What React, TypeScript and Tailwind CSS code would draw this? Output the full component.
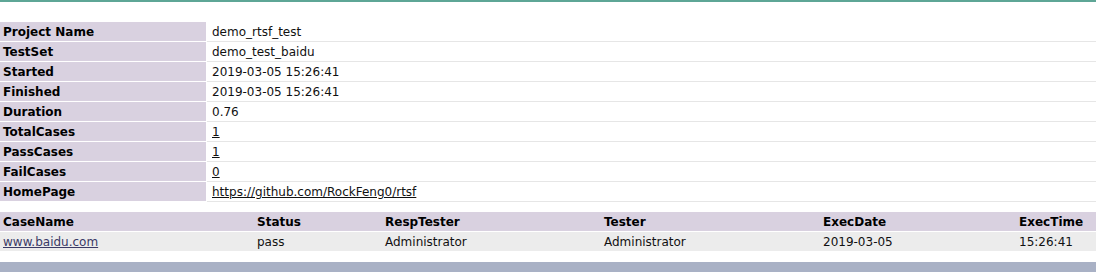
import React from "react";

const info: { label: string; value: string; link?: boolean }[] = [
  { label: "Project Name", value: "demo_rtsf_test" },
  { label: "TestSet", value: "demo_test_baidu" },
  { label: "Started", value: "2019-03-05 15:26:41" },
  { label: "Finished", value: "2019-03-05 15:26:41" },
  { label: "Duration", value: "0.76" },
  { label: "TotalCases", value: "1", link: true },
  { label: "PassCases", value: "1", link: true },
  { label: "FailCases", value: "0", link: true },
  { label: "HomePage", value: "https://github.com/RockFeng0/rtsf", link: true },
];

const cols = ["CaseName", "Status", "RespTester", "Tester", "ExecDate", "ExecTime"];
const row = ["www.baidu.com", "pass", "Administrator", "Administrator", "2019-03-05", "15:26:41"];
const grid = "grid grid-cols-[254px_128px_219px_219px_196px_80px]";

export default function App() {
  return (
    <div
      className="w-[1096px] h-[272px] bg-white text-[12px] text-[#111] overflow-hidden"
      style={{ fontFamily: '"DejaVu Sans", Verdana, sans-serif' }}
    >
      <div className="h-[2px] bg-[#5ea696]" />
      <div className="mt-[20px] flex flex-col">
        {info.map((r) => (
          <div key={r.label} className="flex h-[20px]">
            <div className="w-[206px] h-[20px] bg-[#d9d1e0] border-b border-white pl-[3px] font-bold leading-[21px] text-black overflow-hidden">
              {r.label}
            </div>
            <div className="w-px bg-white" />
            <div className="flex-1 h-[20px] border-b border-[#e6e6e6] pl-[5px] leading-[21px] overflow-hidden">
              {r.link ? <span className="underline text-[#111]">{r.value}</span> : r.value}
            </div>
          </div>
        ))}
      </div>
      <div className="mt-[10px]">
        <div className={`${grid} h-[20px] bg-[#d9d1e0] border-b border-white font-bold leading-[21px] text-black overflow-hidden`}>
          {cols.map((c) => (
            <div key={c} className="pl-[3px]">{c}</div>
          ))}
        </div>
        <div className={`${grid} h-[19px] bg-[#ececec] leading-[21px] overflow-hidden`}>
          {row.map((c, i) => (
            <div key={i} className="pl-[3px]">
              {i === 0 ? <span className="underline text-[#3a3a66]">{c}</span> : c}
            </div>
          ))}
        </div>
      </div>
      <div className="mt-[11px] h-[10px] bg-[#a9b1c5]" />
    </div>
  );
}
